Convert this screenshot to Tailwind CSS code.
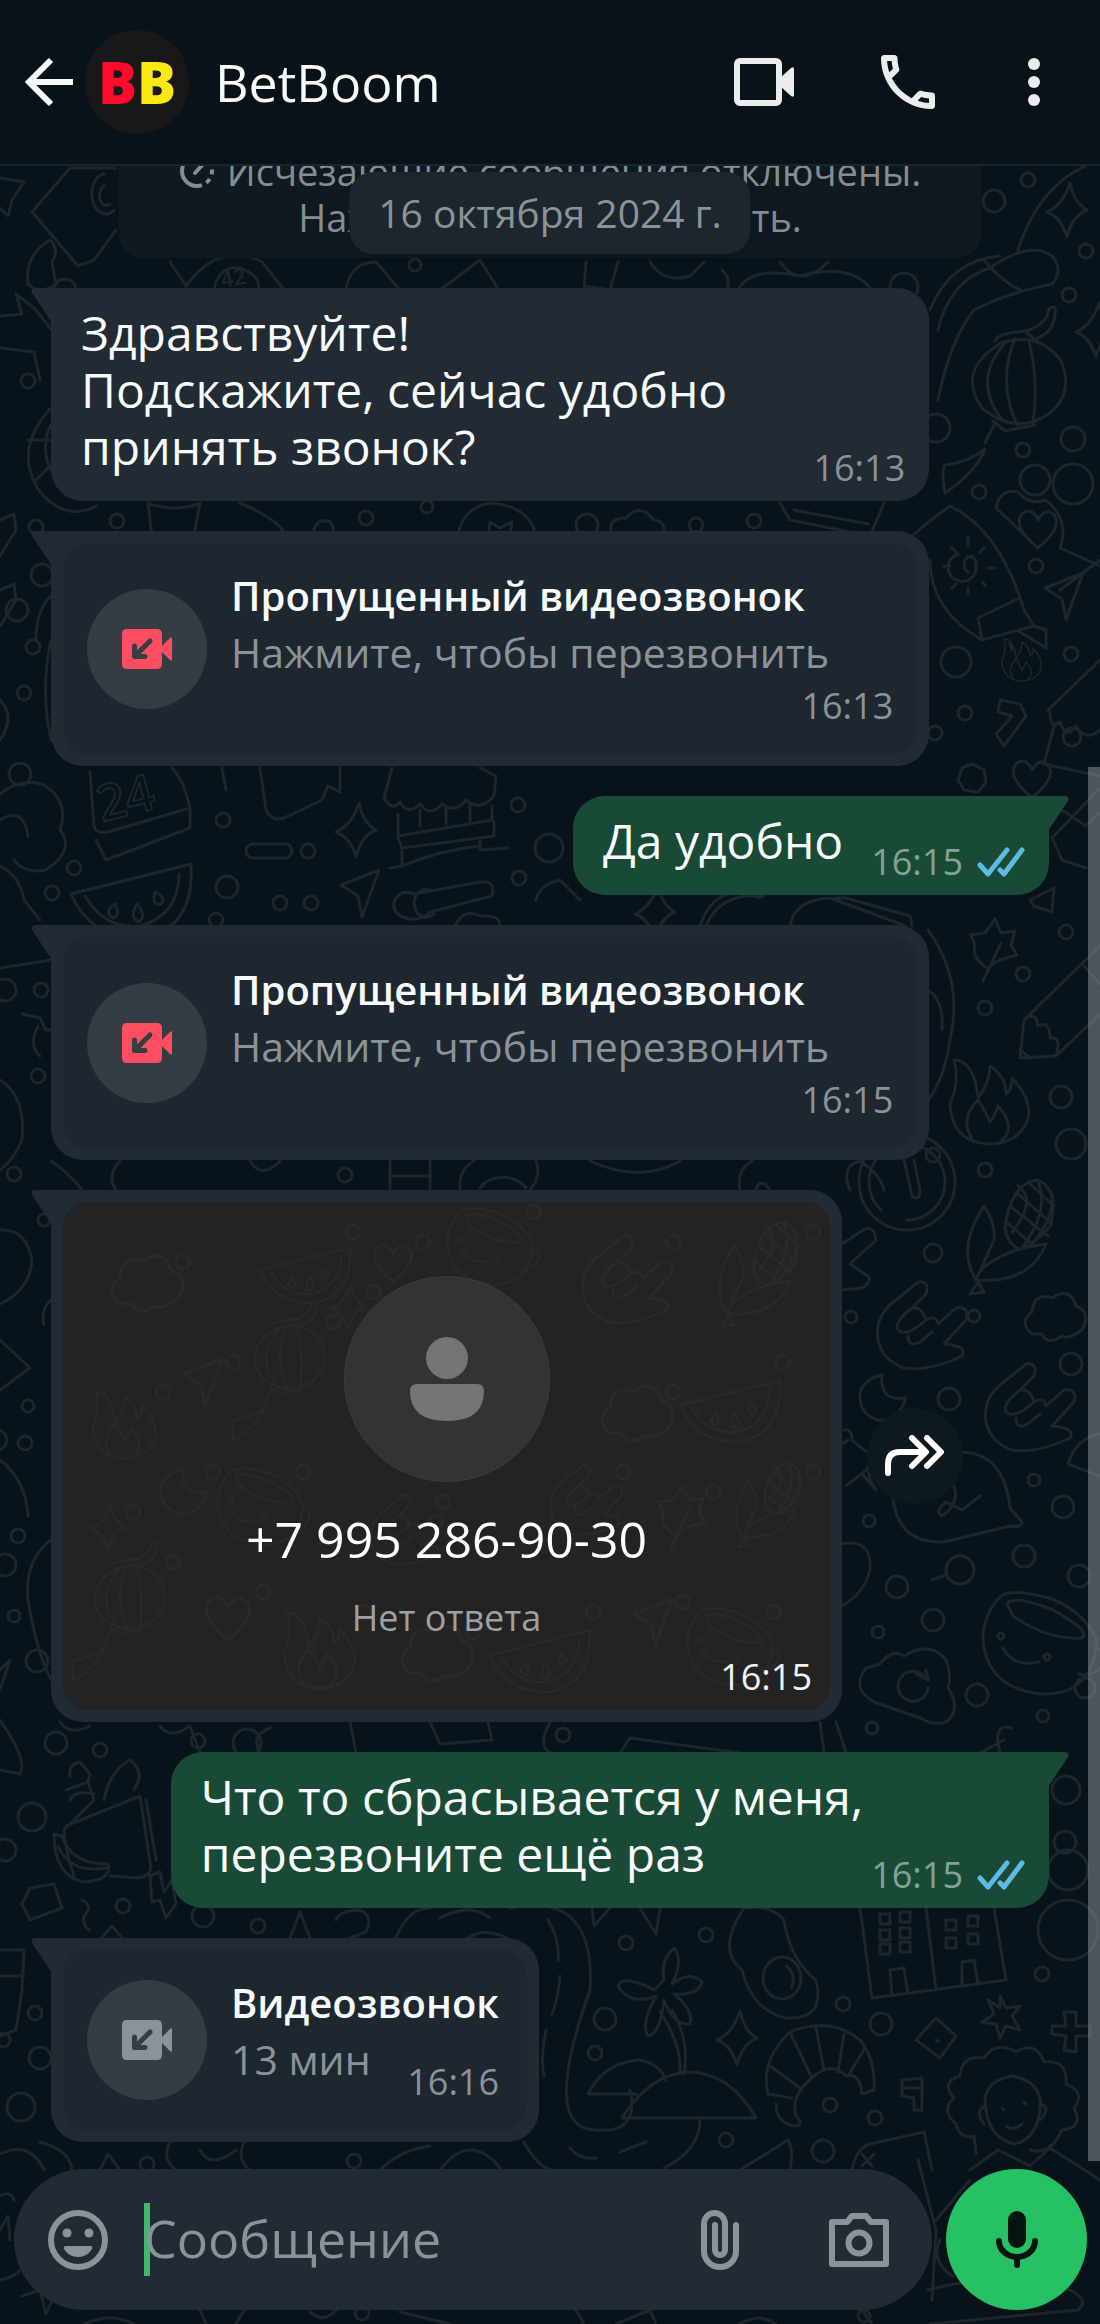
<!DOCTYPE html>
<html lang="ru">
<head>
    <meta charset="UTF-8">
    <meta name="viewport" content="width=device-width, initial-scale=1.0">
    <title>BetBoom</title>
    <script src="https://cdn.jsdelivr.net/npm/@tailwindcss/browser@4"></script>
    <style>
        * {
            font-family: 'Open Sans', 'Noto Sans', sans-serif;
        }
    </style>
</head>
<body class="bg-[#07121a]">
    <!-- Shared shapes -->
    <svg class="hidden" aria-hidden="true">
        <symbol id="star" viewBox="-30 -30 60 60" overflow="visible"><path d="M3-27Q7-7 20 0Q5 6 0 27Q-6 7-20 2Q-4-5 3-27Z"/></symbol>
        <symbol id="plane" viewBox="-30 -30 60 60" overflow="visible"><path d="M19-23L-19-8L-2 3L2 24Z"/></symbol>
        <symbol id="cloud" viewBox="-30 -30 60 60" overflow="visible"><path d="M-24 14Q-38 2-24-8Q-22-28-4-22Q14-34 20-14Q36-8 26 10Q12 20 6 16Q-8 26-14 14Z"/></symbol>
        <symbol id="heart" viewBox="-30 -30 60 60" overflow="visible"><path d="M0 20Q-26-2-16-14Q-6-22 0-8Q8-22 17-12Q24 0 0 20Z"/></symbol>
        <symbol id="flame" viewBox="-50 -50 100 100" overflow="visible"><path d="M-38 6Q-28-16-34-38Q-14-38-10 0Q2-16 2-32Q18-22 18-4Q24-8 24-20Q48 6 38 26Q28 46 0 46Q-36 44-38 6ZM-14 44Q-30 22-10 2Q-2 14 2 24Q8 16 10 8Q30 30 12 44"/></symbol>
        <symbol id="moon" viewBox="-30 -30 60 60" overflow="visible"><path d="M0-23Q-3 4 24 0Q16 24-4 22Q-24 16-22-6Q-16-20 0-23Z"/></symbol>
        <symbol id="hand" viewBox="-50 -50 100 100" overflow="visible"><path d="M-40 12Q-44-12-22-28L0-46Q12-48 8-34L-6-20Q4-22 8-8Q18-14 20-4L38-20Q52-22 48-8L26 16Q50 18 44 28Q10 44-14 40Q-36 32-40 12ZM-6-20Q-24-6-20 2Q-12 10 8-8M-10 8Q-10 20 2 14L14 4"/></symbol>
        <symbol id="leaf" viewBox="-30 -30 60 60" overflow="visible"><path d="M-6 24Q-24 14-20 0L-24-10L-10-12L0-26L6-12L20-14L16 0L22 10L8 14L-2 18ZM-12 36L6-2"/></symbol>
        <symbol id="melon" viewBox="-60 -60 120 120" overflow="visible"><path d="M-64 4L56-26Q60 36 10 48Q-44 50-64 4ZM-50 6Q-30 40 6 36Q44 24 44-16M-20 14q-12 8-2 14q8-2 2-14ZM2 14q-8 14 2 18q8-6-2-18ZM20 2q-4 14 6 12q6-6-6-12Z"/></symbol>
        <symbol id="mug" viewBox="-60 -60 120 120" overflow="visible"><path d="M-36-48Q-24-56 12-46Q46-34 60-4Q56 52 4 50Q-50 44-54-4Q-54-30-36-48ZM-30-40Q-24-50 16-34Q56-12 44-6Q10-4-24-28ZM-34 4Q-24 24 2 18M58 4Q74 6 66 20Q56 34 42 30"/><circle cx="-36" cy="-8" r="3"/><circle cx="10" cy="13" r="3"/></symbol>
        <symbol id="lantern" viewBox="-60 -60 120 120" overflow="visible"><path d="M-16-38Q22-50 44-20Q58 14 30 34Q-2 54-34 28Q-62-10-16-38ZM-12-38Q-46 0-14 40M-2-42Q-20 0 0 44M12-40Q22 0 16 42M-22-40Q-20-48 8-50L22-38M8-50Q30-56 32-72Q40-78 38-66Q36-48 18-42M-24 40L-12 50L18 44M-22 42L-32 62M-32 68Q-40 90-72 112Q-76 88-72 84Q-50 82-32 68Z"/></symbol>
        <symbol id="corn" viewBox="-60 -60 120 120" overflow="visible"><path d="M-4-20Q4-58 28-60Q50-50 40-14Q30 0 10 10Q-8 0-4-20ZM0-34L38-4M6-48L42-16M18-58L44-34M-4-18L22 4M8-54Q28-40 2-8M28-58Q40-30 12 8M42-46Q44-20 20 6M-26-34Q-14-16-16 0L-34 40Q-54 8-26-34ZM-34 40Q-30 22 12 8L36 4Q20 44-34 40ZM-32 42L-40 54L-26 52Z"/></symbol>
    </svg>

    <div class="relative flex h-screen min-h-[1400px] flex-col overflow-hidden">
        <!-- Wallpaper -->
        <svg id="wall" class="absolute inset-0 h-full w-full" viewBox="0 0 1100 2324" preserveAspectRatio="xMidYMid slice" fill="none" stroke="#1c262c" stroke-width="3" stroke-linecap="round" stroke-linejoin="round" aria-hidden="true">
            <!-- top -->
            <path d="M0 178L24 182L12 200L8 216L0 208M32 212L70 168H116M34 214L78 266L94 260L116 230M104 174a14 20 0 1 0 10 36M104 186a7 10 0 1 0 6 18M50 240Q24 256 28 284Q40 296 56 284L52 262Q60 250 50 240M170 262L186 286Q220 240 262 262L284 290M214 290Q218 266 240 268Q262 276 258 290M346 290Q350 262 376 262L400 290M440 290L480 260L500 292M586 262L584 286L610 290L618 262M650 262Q664 284 690 276L704 262M728 290V278L722 270M738 290Q750 266 800 276Q850 262 872 290M780 262Q800 290 828 262"/>
            <text x="222" y="288" transform="rotate(-10 222 288)" fill="#1c262c" stroke="none" font-size="22" font-weight="600">42</text>
            <path d="M938 330Q950 280 990 268Q1030 240 1052 256Q1064 270 1052 284Q1010 292 974 310Q950 340 938 400M984 260Q1000 280 1020 290M930 310Q950 260 1000 256M1018 250Q1040 180 1100 160"/>
            <path d="M0 316L22 314L16 294L34 308L52 330M0 348L34 352L40 380M51 408Q12 450 40 492Q66 522 96 506M51 424Q40 450 51 470M28 440H50M36 480L52 464"/>
            <!-- between first messages -->
            <path d="M148 503L152 536M200 503L194 536M240 503Q280 520 286 536M150 504Q174 512 198 504M312 536Q316 516 330 522Q336 530 332 536M458 536Q462 508 490 503Q530 506 536 536M488 536L490 522L500 528L512 522L510 536M612 536Q606 518 626 518Q640 502 654 520Q668 522 662 536M780 503L790 520L870 536L884 503M794 510L868 524"/>
            <!-- flask with sun -->
            <path d="M912 536Q930 520 950 506Q1000 530 1024 610L1034 626L982 640Q930 610 930 560M982 640L978 618L1020 598M1034 626L1046 630V648L1020 632M1010 644L1012 650"/>
            <path d="M968 572a6 8 0 1 1 8-6a14 14 0 1 1-18-12M968 538V546M968 588V594M944 566H950M988 568H994M951 547l5 5M984 548l-4 4M952 588l4-4M986 586l-4-4"/>
            <path d="M996 508Q1000 488 1018 492Q1030 506 1046 500Q1070 520 1060 548L1100 566M996 508L1030 540M1100 560L1060 590"/>
            <path d="M1048 710L1100 660M1050 712Q1050 730 1060 722Q1066 740 1076 726Q1086 742 1100 730M1054 726L1044 764L1100 776M1000 700L1020 704L1026 716L1004 746L996 734L1012 716L998 712Z"/>
            <path d="M972 764L984 770L986 782L978 792L964 790L958 780L962 768ZM0 520L14 514L16 530L0 556M0 590L14 584L16 600L0 626M51 596Q36 610 36 640M0 700Q16 716 0 740M51 640Q40 690 51 740"/>
            <!-- left of the first reply -->
            <path d="M0 794Q20 778 42 784Q70 800 60 830Q76 850 46 870Q24 874 14 860M0 820Q24 806 28 836M0 866Q20 876 24 900L40 920M90 772L94 826Q96 834 108 832L190 808Q184 780 172 768M96 840L106 860L190 828V808M222 768L226 790M260 768L266 810Q272 822 284 818L322 800L328 786L340 792V768"/>
            <text x="102" y="822" transform="rotate(-14 102 822)" stroke-width="2" font-size="50" font-weight="600">24</text>
            <path d="M384 798Q392 812 400 802Q408 816 420 804Q430 818 442 804Q456 814 466 800Q480 812 494 796L496 776L480 768M384 798L392 768M398 814V836L492 820V806M420 810V826M446 808V824M470 804V822M398 838L402 848L494 836V822M402 848V866L390 868M480 838V850L508 848M402 866Q440 850 480 846"/>
            <rect x="246" y="844" width="46" height="14" rx="7"/>
            <path d="M394 902Q400 888 414 894L480 882Q496 880 492 896L430 912Q420 922 406 918Q392 914 394 902M430 890a12 14 0 1 0 4 24M456 924Q464 908 480 916Q500 914 500 926M536 900Q540 884 560 880L580 900M700 926Q716 880 760 898M706 926Q720 892 764 896M790 926Q794 900 830 898L906 926M836 898L846 898L910 916L912 926M1030 900L1054 888L1052 912L1034 906Z"/>
            <path d="M1100 788L1052 838L1062 860L1086 868M1062 810L1086 826L1100 812"/>
            <!-- right of the second call -->
            <path d="M928 930Q964 980 950 1040Q944 1080 928 1100M928 990Q944 1000 942 1030M1100 946L1024 1020L1020 1058L1056 1056L1100 1014M1024 1020Q1036 1010 1038 1026Q1050 1020 1050 1038Q1062 1036 1056 1056M1084 966L1100 984M1020 1050L1030 1058"/>
            <path d="M0 968L51 960M22 1014L40 1018L46 1030H51M38 1026Q28 1046 40 1056M0 1080Q26 1096 22 1140Q14 1160 0 1170M120 1161Q106 1176 116 1190M51 1161Q70 1174 84 1192M250 1161Q262 1180 280 1161M390 1161V1190M430 1161V1190M390 1176H430M460 1190Q458 1170 474 1161M530 1190Q542 1176 536 1161M480 1188a26 20 0 0 1 46 0M590 1161Q640 1184 680 1161M740 1190Q736 1170 752 1161M850 1190Q840 1166 860 1161Q880 1174 884 1190M756 1190Q760 1176 770 1190"/>
            <circle cx="907" cy="1182" r="48"/><circle cx="907" cy="1182" r="38" stroke-dasharray="60 28"/>
            <path d="M904 1160L912 1196Q920 1202 920 1190L914 1160"/>
            <!-- beside the picture -->
            <path d="M842 1290L862 1288Q872 1282 868 1276L850 1264L876 1240Q874 1222 860 1232L842 1244"/>
            <path d="M844 1430Q852 1428 852 1440L864 1450L876 1456L874 1464L846 1486M862 1474L876 1490L870 1480L868 1466"/>
            <path d="M893 1498Q900 1460 960 1452Q1004 1452 1010 1508L1022 1522Q1022 1528 1010 1526L944 1542Q898 1544 893 1498ZM928 1498Q936 1482 954 1486Q960 1504 942 1516Q934 1512 946 1502L962 1510L980 1496"/>
            <path d="M1100 1434Q1076 1438 1068 1464L1100 1476M842 1544Q872 1538 870 1570Q864 1594 842 1606M842 1444L848 1440"/>
            <path d="M946 1575L932 1580M880 1664Q892 1648 904 1656Q930 1640 946 1660Q952 1676 948 1688Q962 1710 946 1722Q934 1726 920 1718L874 1702Q850 1688 866 1668ZM924 1676A15 15 0 1 0 928 1688M916 1674L928 1680L926 1670"/>
            <path d="M0 1230Q26 1228 32 1260Q30 1290 0 1304M0 1340L30 1368L0 1390M0 1460Q26 1480 28 1516M51 1540Q24 1560 28 1600Q36 1650 51 1680M0 1670L10 1660L0 1690M51 1300Q40 1310 44 1324M0 1430Q14 1440 0 1450"/>
            <path d="M60 1722Q70 1736 90 1726M160 1726Q170 1740 190 1726L200 1753M260 1753Q250 1736 270 1728M350 1722L356 1753M430 1722L440 1744L492 1740L488 1722M550 1722Q530 1760 572 1753M620 1753L630 1738L850 1768M820 1722L824 1753M836 1722L846 1753M1000 1753Q992 1722 1012 1728M1004 1740L980 1753"/>
            <!-- lunch bag -->
            <path d="M66 1790L88 1782L94 1800L64 1830Q66 1854 74 1876M70 1800Q74 1790 94 1794M70 1776Q68 1764 80 1762L90 1774L88 1782M104 1800Q110 1770 130 1760Q146 1772 134 1790M66 1826L140 1796L150 1862Q154 1876 138 1878L110 1876M146 1800L156 1860M54 1834L62 1836Q70 1864 108 1864Q112 1880 84 1882Q54 1876 54 1834ZM58 1846Q70 1874 106 1868M30 1888L54 1884L62 1908L30 1920L22 1904ZM150 1876L160 1872L164 1892L172 1880L176 1904L166 1918L160 1900L152 1902Z"/>
            <path d="M82 1900Q94 1906 84 1916Q82 1926 90 1930M0 1720Q28 1760 20 1774L0 1770M0 1950H24L22 1990L16 2030L0 2036M0 1976H24M336 1920Q340 1910 360 1910Q374 1916 366 1932L350 1938M290 1938L300 1912L310 1938M100 1940L112 1926L122 1938"/>
            <!-- island -->
            <path d="M396 1938Q408 1908 430 1908M440 1918Q470 1902 490 1918M468 1938Q486 1926 510 1940M510 1908Q596 1890 590 1990Q540 2130 596 2130Q640 2134 630 2090M548 1920Q560 1940 558 1960M560 1976Q558 2000 552 2014M546 2030Q540 2060 544 2076M592 1908L594 1926L610 1908M640 1908L656 1934L660 1908M524 2142Q540 2172 560 2172M700 2120Q700 2150 664 2168M570 2148Q580 2160 596 2158M620 2152L646 2142"/>
            <path d="M664 1980Q660 1960 674 1948Q684 1960 672 1984Q690 1970 702 1982Q698 1996 674 1994Q694 2010 690 2024Q674 2026 664 2000Q660 2034 648 2036Q640 2024 656 1996Q630 2006 618 1986Q624 1974 654 1990ZM672 2010Q690 2040 684 2074M660 2012Q682 2044 680 2074M622 2118Q650 2074 688 2072Q730 2072 756 2118ZM588 2094Q604 2062 640 2060Q660 2064 666 2080M588 2094H636"/>
            <!-- egg, building, croissant -->
            <path d="M744 1908Q770 1904 784 1920Q790 1960 816 1980Q826 2020 786 2018Q752 2010 742 1970Q716 1950 744 1908Z"/><ellipse cx="782" cy="1978" rx="19" ry="21"/><path d="M786 1966Q796 1972 792 1988"/>
            <path d="M860 1908L872 1998L1006 1980L994 1908M926 1908L936 1990M880 1914h10v10h-10zM900 1912h10v10h-10zM880 1930h10v10h-10zM900 1928h10v10h-10zM880 1944h10v10h-10zM900 1942h10v10h-10zM946 1920h10v10h-10zM968 1916h10v10h-10zM946 1938h10v10h-10zM968 1934h10v10h-10zM892 1996L890 1970L904 1968L908 1994M962 1986V1962L974 1960L978 1984"/>
            <path d="M768 2094Q760 2060 790 2032Q830 2016 860 2040Q876 2060 874 2090L862 2094Q860 2072 846 2076Q830 2060 812 2078Q790 2096 796 2116Q804 2124 796 2126Q776 2124 776 2104M790 2032L812 2078M816 2028L824 2070M844 2034L838 2072M864 2050L848 2076M770 2066L800 2088M768 2094L792 2098"/>
            <path d="M936 2018L956 2036L940 2058L916 2040ZM936 2040l2 1M1000 1996l6 12l14-2l-8 10l8 14l-14-4l-6 12l-4-14l-14-2l12-8l-6-14l12 8ZM1064 2012h12v14h14v10h-14v16l-12-2l2-14l-14-2v-8h14ZM902 2080L922 2078V2110H914V2098L902 2096ZM904 2088H922"/>
            <!-- girl -->
            <path d="M956 2124Q940 2110 954 2098Q940 2082 960 2076Q962 2054 984 2058Q996 2040 1016 2052Q1036 2040 1044 2062Q1068 2060 1066 2084Q1086 2092 1074 2108Q1084 2128 1062 2130Q1050 2156 1030 2150M956 2124Q960 2140 974 2136L976 2154M986 2110Q980 2082 1012 2076Q1044 2082 1040 2110Q1036 2140 1014 2144Q990 2138 986 2110ZM986 2106Q974 2110 984 2124M1040 2104Q1052 2108 1040 2120M1006 2126Q1014 2132 1022 2124M1002 2108l2 2M1024 2102l2 2"/>
            <path d="M852 2170Q856 2148 870 2144L924 2132L932 2170M862 2154l10 12M874 2154l-12 12M740 2170L788 2140Q794 2150 790 2170M970 2170L998 2150L1030 2166L1050 2148L1100 2180M918 2160L936 2230L932 2300M936 2220L970 2180"/>
            <!-- under the composer -->
            <path d="M40 2142Q70 2150 72 2170M0 2154Q30 2140 44 2170M100 2170L108 2154L120 2170M170 2142Q160 2162 180 2172M200 2150Q210 2170 236 2150M244 2142Q236 2160 250 2170M380 2170Q400 2150 430 2146M440 2170Q470 2130 502 2170M0 2196Q10 2190 14 2200M0 2230L8 2216L10 2240M0 2280Q20 2276 28 2260M22 2296L40 2290L46 2314L54 2296M84 2324Q110 2312 134 2324M200 2310L206 2324M244 2310L236 2324M310 2312Q324 2324 336 2310M400 2312L450 2324M576 2310L584 2324M616 2324L650 2310L656 2324M740 2324Q760 2312 776 2324M862 2310L872 2324M928 2290Q1000 2270 1070 2290Q1090 2300 1078 2310L930 2324M940 2240Q930 2260 952 2276"/>
            <use href="#star" x="1037" y="180" width="60" height="60"/><use href="#star" x="1066" y="300" width="60" height="60"/><use href="#star" x="326" y="800" width="60" height="60"/><use href="#star" x="625" y="882" width="60" height="60"/><use href="#star" x="707" y="2008" width="60" height="60"/>
            <use href="#lantern" x="957" y="321" width="120" height="120"/><use href="#heart" x="1008" y="498" width="60" height="60"/><use href="#plane" x="1034" y="566" width="60" height="60"/><use href="#flame" x="996" y="633" width="50" height="50"/><use href="#heart" x="1002" y="748" width="60" height="60"/>
            <use href="#melon" x="75" y="830" width="120" height="120"/><use href="#plane" x="330" y="863" width="60" height="60"/><use href="#leaf" x="965" y="915" width="60" height="60"/><use href="#flame" x="938" y="1048" width="100" height="100"/><use href="#corn" x="950" y="1180" width="120" height="120"/>
            <use href="#hand" x="868" y="1278" width="100" height="100"/><use href="#cloud" x="1026" y="1290" width="60" height="60"/><use href="#hand" x="976" y="1360" width="100" height="100"/><use href="#moon" x="852" y="1368" width="60" height="60"/><use href="#mug" x="977" y="1584" width="120" height="120"/>
        </svg>

        <!-- Header -->
        <header class="relative flex shrink-0 items-center border-b-2 border-[#1a242a] bg-[#0a1219] py-[30px] pr-[60px] pl-6 text-[#f7fafb]">
            <button type="button" aria-label="Назад" class="shrink-0">
                <svg class="h-12 w-[50px]" viewBox="0 0 50 48" fill="none" stroke="currentColor" stroke-width="6"><path d="M49 24H6M27 2L5 24L27 46"/></svg>
            </button>
            <div class="ml-[11px] flex size-[104px] shrink-0 items-center justify-center rounded-full bg-[#181818] text-[58px] leading-none font-black">
                <span class="font-[Roboto] text-[#ff0a2b]">B</span><span class="font-[Roboto] text-[#f9e814]">B</span>
            </div>
            <h1 class="ml-[26px] grow text-[52px] leading-[68px]">BetBoom</h1>
            <div class="flex items-center text-[#e9edee]">
                <button type="button" aria-label="Видеозвонок">
                    <svg class="h-12 w-[60px]" viewBox="0 0 60 48" fill="none" stroke="currentColor"><rect x="3" y="3" width="42" height="42" rx="3" stroke-width="6"/><path d="M46 20L57 10Q60 8 60 11V37Q60 40 57 38L46 28Z" fill="currentColor" stroke="none"/></svg>
                </button>
                <button type="button" aria-label="Позвонить" class="ml-[78px]">
                    <svg class="size-[72px]" viewBox="0 0 24 24" fill="currentColor"><path d="M6.54 5c.06.89.21 1.76.45 2.59l-1.2 1.2c-.41-1.2-.67-2.47-.76-3.79h1.51m9.86 12.02c.85.24 1.72.39 2.6.45v1.49c-1.32-.09-2.59-.35-3.8-.75l1.2-1.19M7.5 3H4c-.55 0-1 .45-1 1 0 9.39 7.61 17 17 17 .55 0 1-.45 1-1v-3.49c0-.55-.45-1-1-1-1.24 0-2.45-.2-3.57-.57-.1-.04-.21-.05-.31-.05-.26 0-.51.1-.71.29l-2.2 2.2c-2.83-1.45-5.15-3.76-6.59-6.59l2.2-2.2c.28-.28.36-.67.25-1.02C8.7 6.45 8.5 5.25 8.5 4c0-.55-.45-1-1-1z"/></svg>
                </button>
                <button type="button" aria-label="Меню" class="ml-[84px]">
                    <svg class="h-12 w-3" viewBox="0 0 12 48" fill="currentColor"><circle cx="6" cy="6" r="6"/><circle cx="6" cy="24" r="6"/><circle cx="6" cy="42" r="6"/></svg>
                </button>
            </div>
        </header>

        <!-- Messages, scrolled to the end -->
        <main class="relative flex min-h-0 grow flex-col justify-end gap-[30px] overflow-hidden px-[51px] text-[#f7fafb]">
            <div class="flex shrink-0 flex-col items-center self-center rounded-3xl bg-[#111920] px-[60px] py-[18px] text-[38px] leading-[46px] text-[#868c90]">
                <p class="flex items-center gap-3">
                    <svg class="size-9" viewBox="0 0 36 36" fill="none" stroke="currentColor" stroke-width="4" aria-hidden="true"><path d="M18 3A15 15 0 0 0 18 33"/><path d="M18 33A15 15 0 0 0 18 3" stroke-dasharray="5 5"/><path d="M16 20L26 9" stroke-linecap="round"/></svg>
                    Исчезающие сообщения отключены.
                </p>
                <p>Нажмите, чтобы изменить.</p>
            </div>

            <div class="relative flex w-[88%] shrink-0 items-end justify-between rounded-[32px] rounded-tl-none bg-[#222b33] pt-4 pr-6 pb-2.5 pl-[30px]">
                <svg class="absolute top-0 right-full -mr-px h-9 w-[21px] text-[#222b33]" viewBox="0 0 21 36" fill="currentColor"><path d="M21 0H4Q-1 0 1 5L21 35Z"/></svg>
                <p class="pb-4 text-5xl leading-[57px]">Здравствуйте!<br>Подскажите, сейчас удобно<br>принять звонок?</p>
                <time class="text-[36px] leading-[46px] text-[#8b9398]">16:13</time>
            </div>

            <div class="relative w-[88%] shrink-0 rounded-[32px] rounded-tl-none bg-[#222b33] p-3">
                <svg class="absolute top-0 right-full -mr-px h-9 w-[21px] text-[#222b33]" viewBox="0 0 21 36" fill="currentColor"><path d="M21 0H4Q-1 0 1 5L21 35Z"/></svg>
                <button type="button" class="flex w-full items-center gap-6 rounded-3xl bg-[#1e272f] px-6 py-6 text-left">
                    <span class="flex size-[120px] shrink-0 items-center justify-center rounded-full bg-[#353c43] text-[#ff4d60]">
                        <svg class="h-10 w-[50px]" viewBox="0 0 50 40"><path d="M5 0H35Q40 0 40 5V17L48 9Q50 7 50 10V30Q50 33 48 31L40 23V35Q40 40 35 40H5Q0 40 0 35V5Q0 0 5 0Z" fill="currentColor"/><path d="M28 12L13 27M12.500 17V27.500H23" fill="none" stroke="#353c43" stroke-width="5" stroke-linecap="round" stroke-linejoin="round"/></svg>
                    </span>
                    <span class="flex grow flex-col">
                        <span class="text-[40px] leading-[57px] font-semibold">Пропущенный видеозвонок</span>
                        <span class="text-[41px] leading-[57px] text-[#8b9398]">Нажмите, чтобы перезвонить</span>
                        <time class="self-end text-[36px] leading-[49px] text-[#8b9398]">16:13</time>
                    </span>
                </button>
            </div>

            <div class="relative flex shrink-0 items-end gap-7 self-end rounded-[32px] rounded-tr-none bg-[#184a36] pt-4 pr-6 pb-2.5 pl-[30px]">
                <svg class="absolute top-0 left-full -ml-px h-9 w-[21px] text-[#184a36]" viewBox="0 0 21 36" fill="currentColor"><path d="M0 0H17Q22 0 20 5L0 35Z"/></svg>
                <p class="pb-4 text-5xl leading-[57px]">Да удобно</p>
                <div class="flex items-center gap-[14px]">
                    <time class="text-[36px] leading-[46px] text-[#84a394]">16:15</time>
                    <svg class="h-[30px] w-12" viewBox="0 0 48 30" fill="none" stroke="#5cbbe2" stroke-width="5" stroke-linecap="round" stroke-linejoin="round" aria-label="Прочитано"><path d="M3 18L11 27L30 3M23 23L27 27L45 3"/></svg>
                </div>
            </div>

            <div class="relative w-[88%] shrink-0 rounded-[32px] rounded-tl-none bg-[#222b33] p-3">
                <svg class="absolute top-0 right-full -mr-px h-9 w-[21px] text-[#222b33]" viewBox="0 0 21 36" fill="currentColor"><path d="M21 0H4Q-1 0 1 5L21 35Z"/></svg>
                <button type="button" class="flex w-full items-center gap-6 rounded-3xl bg-[#1e272f] px-6 py-6 text-left">
                    <span class="flex size-[120px] shrink-0 items-center justify-center rounded-full bg-[#353c43] text-[#ff4d60]">
                        <svg class="h-10 w-[50px]" viewBox="0 0 50 40"><path d="M5 0H35Q40 0 40 5V17L48 9Q50 7 50 10V30Q50 33 48 31L40 23V35Q40 40 35 40H5Q0 40 0 35V5Q0 0 5 0Z" fill="currentColor"/><path d="M28 12L13 27M12.500 17V27.500H23" fill="none" stroke="#353c43" stroke-width="5" stroke-linecap="round" stroke-linejoin="round"/></svg>
                    </span>
                    <span class="flex grow flex-col">
                        <span class="text-[40px] leading-[57px] font-semibold">Пропущенный видеозвонок</span>
                        <span class="text-[41px] leading-[57px] text-[#8b9398]">Нажмите, чтобы перезвонить</span>
                        <time class="self-end text-[36px] leading-[49px] text-[#8b9398]">16:15</time>
                    </span>
                </button>
            </div>

            <!-- Picture message -->
            <div class="flex shrink-0 items-center gap-[25px] pr-[86px]">
                <div class="relative grow rounded-[32px] rounded-tl-none bg-[#222b33] p-3">
                    <svg class="absolute top-0 right-full -mr-px h-9 w-[21px] text-[#222b33]" viewBox="0 0 21 36" fill="currentColor"><path d="M21 0H4Q-1 0 1 5L21 35Z"/></svg>
                    <div class="relative flex flex-col items-center overflow-hidden rounded-3xl bg-[#232323] px-[18px] pt-[74px] pb-[9px]">
                        <svg id="cardWall" class="absolute inset-0 h-full w-full" viewBox="0 0 767 508" preserveAspectRatio="xMidYMid slice" fill="none" stroke="#292929" stroke-width="3" stroke-linecap="round" stroke-linejoin="round" aria-hidden="true"></svg>
                        <div class="relative flex size-[206px] items-center justify-center rounded-full border border-[#3c3c3c] bg-[#333]">
                            <svg class="h-[84px] w-[74px]" viewBox="0 0 74 84" fill="#757575"><circle cx="37" cy="21" r="21"/><path d="M7 47H67Q74 47 74 54Q74 84 37 84Q0 84 0 54Q0 47 7 47Z"/></svg>
                        </div>
                        <p class="relative mt-[22px] text-[50px] leading-[70px] text-white">+7 995 286-90-30</p>
                        <p class="relative mt-5 text-[36px] leading-[48px] text-[#a0a0a0]">Нет ответа</p>
                        <time class="relative mt-[11px] self-end text-[36px] leading-[48px] text-[#f2f2f2]">16:15</time>
                    </div>
                </div>
                <button type="button" aria-label="Переслать" class="flex size-24 shrink-0 items-center justify-center rounded-full bg-[#0d181f]">
                    <svg class="h-[42px] w-[60px]" viewBox="0 0 60 42" fill="none" stroke="#fff" stroke-width="6" stroke-linecap="round" stroke-linejoin="round"><path d="M3 38V29Q3 17 15 17H40M27 3L41 17L27 31M42 3L56 17L42 31"/></svg>
                </button>
            </div>

            <div class="relative flex max-w-[89%] shrink-0 items-end gap-2 self-end rounded-[32px] rounded-tr-none bg-[#184a36] pt-4 pr-6 pb-2.5 pl-[30px]">
                <svg class="absolute top-0 left-full -ml-px h-9 w-[21px] text-[#184a36]" viewBox="0 0 21 36" fill="currentColor"><path d="M0 0H17Q22 0 20 5L0 35Z"/></svg>
                <p class="pb-4 text-5xl leading-[57px] whitespace-nowrap">Что то сбрасывается у меня,<br>перезвоните ещё раз</p>
                <div class="flex items-center gap-[14px]">
                    <time class="text-[36px] leading-[46px] text-[#84a394]">16:15</time>
                    <svg class="h-[30px] w-12" viewBox="0 0 48 30" fill="none" stroke="#5cbbe2" stroke-width="5" stroke-linecap="round" stroke-linejoin="round" aria-label="Прочитано"><path d="M3 18L11 27L30 3M23 23L27 27L45 3"/></svg>
                </div>
            </div>

            <div class="relative shrink-0 self-start rounded-[32px] rounded-tl-none bg-[#222b33] p-3">
                <svg class="absolute top-0 right-full -mr-px h-9 w-[21px] text-[#222b33]" viewBox="0 0 21 36" fill="currentColor"><path d="M21 0H4Q-1 0 1 5L21 35Z"/></svg>
                <button type="button" class="flex items-center gap-6 rounded-3xl bg-[#1e272f] py-6 pr-7 pl-6 text-left">
                    <span class="flex size-[120px] shrink-0 items-center justify-center rounded-full bg-[#353c43] text-[#8b9398]">
                        <svg class="h-10 w-[50px]" viewBox="0 0 50 40"><path d="M5 0H35Q40 0 40 5V17L48 9Q50 7 50 10V30Q50 33 48 31L40 23V35Q40 40 35 40H5Q0 40 0 35V5Q0 0 5 0Z" fill="currentColor"/><path d="M28 12L13 27M12.500 17V27.500H23" fill="none" stroke="#353c43" stroke-width="5" stroke-linecap="round" stroke-linejoin="round"/></svg>
                    </span>
                    <span class="flex flex-col">
                        <span class="text-[40px] leading-[57px] font-semibold">Видеозвонок</span>
                        <span class="flex items-end justify-between">
                            <span class="pb-[18px] text-[41px] leading-[57px] text-[#8b9398]">13 мин</span>
                            <time class="text-[36px] leading-[49px] text-[#8b9398]">16:16</time>
                        </span>
                    </span>
                </button>
            </div>

            <div class="absolute top-1.5 left-1/2 -translate-x-1/2 rounded-3xl bg-[#1d262c] px-[29px] py-[18px] text-[39px] leading-[46px] font-medium whitespace-nowrap text-[#8b9398] shadow-md">16 октября 2024 г.</div>
        </main>

        <!-- Composer -->
        <footer class="relative flex shrink-0 items-center gap-[14px] pt-[27px] pr-[13px] pb-[14px] pl-[14px] text-[#8a9498]">
            <form class="flex h-[141px] min-w-0 grow items-center rounded-full bg-[#222b33] pr-[43px] pl-[34px]">
                <button type="button" aria-label="Эмодзи" class="shrink-0">
                    <svg class="size-[60px]" viewBox="0 0 60 60" fill="currentColor"><circle cx="30" cy="30" r="27" fill="none" stroke="currentColor" stroke-width="6"/><circle cx="19" cy="23" r="4.500"/><circle cx="41" cy="23" r="4.500"/><path d="M18 36H42Q45 36 44 39Q39 47 30 47Q21 47 16 39Q15 36 18 36Z"/></svg>
                </button>
                <span class="ml-9 h-[73px] w-1.5 shrink-0 bg-[#3fb96c]"></span>
                <input type="text" aria-label="Сообщение" placeholder="Сообщение" class="-ml-1.5 min-w-0 grow bg-transparent pb-1 text-[52px] leading-[72px] outline-none placeholder:text-[#8a9498]">
                <button type="button" aria-label="Прикрепить" class="shrink-0">
                    <svg class="h-[60px] w-[38px]" viewBox="0 0 38 60" fill="none" stroke="currentColor" stroke-width="6" stroke-linecap="round"><path d="M35 15V41A16 16 0 0 1 3 41V13.500A10.500 10.500 0 0 1 24 13.500V40A5 5 0 0 1 14 40V15"/></svg>
                </button>
                <button type="button" aria-label="Камера" class="ml-[90px] shrink-0">
                    <svg class="h-[54px] w-[60px]" viewBox="0 0 60 54" fill="none" stroke="currentColor" stroke-width="6" stroke-linejoin="round"><path d="M3 9H18L23 3H37L42 9H57V51H3Z"/><circle cx="30" cy="30" r="10.500"/></svg>
                </button>
            </form>
            <button type="button" aria-label="Голосовое сообщение" class="flex size-[141px] shrink-0 items-center justify-center rounded-full bg-[#25c162]">
                <svg class="h-[57px] w-[42px]" viewBox="0 0 42 57" fill="none" stroke="#06140f" stroke-width="6" stroke-linecap="round"><rect x="12" y="0" width="18" height="37" rx="9" fill="#06140f" stroke="none"/><path d="M3 30A18 16 0 0 0 39 30M21 47V54"/></svg>
            </button>
        </footer>

        <!-- Scroll thumb -->
        <div class="absolute top-[33%] right-0 h-[60%] w-3 bg-[#8f9799]/50"></div>
    </div>

    <script>
        // x, y, radius
        const dots = [
            [1028, 180, 7], [994, 201, 11], [1086, 251, 7], [415, 265, 6], [904, 287, 14], [65, 290, 11], [1069, 295, 7], [28, 381, 7],
            [936, 428, 14], [1073, 439, 12], [1023, 450, 7], [1035, 480, 15], [1073, 484, 20], [979, 492, 7], [117, 521, 7], [36, 527, 7],
            [366, 518, 7], [427, 507, 6], [587, 525, 11], [696, 525, 7], [754, 521, 7], [1036, 566, 7], [956, 662, 15], [1071, 654, 7],
            [965, 713, 7], [935, 733, 7], [1072, 737, 9], [42, 575, 11], [17, 610, 11], [33, 647, 7], [24, 693, 7], [20, 774, 11],
            [52, 893, 7], [74, 868, 7], [223, 820, 7], [227, 887, 11], [308, 851, 7], [280, 903, 7], [311, 903, 7], [519, 878, 7],
            [518, 805, 7], [549, 848, 14], [216, 920, 7], [1066, 932, 7], [1023, 974, 7], [985, 1008, 7], [1061, 1097, 11], [1071, 1144, 15],
            [985, 1170, 7], [41, 990, 7], [38, 1076, 7], [5, 990, 11], [345, 1175, 7], [933, 1155, 7], [14, 1174, 7], [933, 1253, 9],
            [851, 1317, 6], [974, 1316, 6], [1071, 1364, 11], [949, 1399, 11], [922, 1430, 6], [1034, 1480, 6], [1063, 1507, 11],
            [869, 1521, 6], [1024, 1556, 11], [960, 1570, 14], [897, 1587, 11], [933, 1620, 11], [878, 1632, 6], [1079, 1576, 11],
            [977, 1695, 11], [1043, 1716, 6], [1085, 1688, 10], [872, 1728, 6], [44, 1220, 6], [28, 1406, 6], [25, 1443, 7], [18, 1536, 7],
            [14, 1616, 6], [37, 1661, 11], [5, 1565, 11], [563, 1735, 7], [56, 1743, 11], [100, 1750, 7], [247, 1743, 14], [198, 1741, 7],
            [32, 1817, 14], [5, 1850, 11], [123, 1906, 7], [258, 1926, 7], [203, 1916, 11], [35, 2013, 7], [40, 2058, 11], [3, 2040, 7],
            [626, 1943, 7], [706, 1935, 7], [605, 2019, 11], [595, 2053, 7], [843, 2004, 7], [881, 2024, 11], [1042, 1974, 7], [830, 2105, 7],
            [875, 2118, 7], [726, 2140, 7], [823, 2151, 11], [21, 2107, 14], [354, 2161, 7], [147, 2164, 7], [1066, 1790, 14],
            [1068, 1870, 20], [1068, 1930, 30], [1065, 1842, 11], [362, 2313, 7], [864, 2316, 6]
        ];
        const cardShapes = [
            ['cloud', 50, 50, 70], ['melon', 200, 20, 90], ['heart', 300, 30, 60], ['mug', 380, 0, 90], ['hand', 510, 30, 100], ['corn', 640, 20, 110],
            ['star', 260, 80, 50], ['flame', 20, 180, 80], ['lantern', 180, 110, 90], ['plane', 110, 150, 60], ['melon', 620, 150, 100], ['cloud', 540, 180, 70],
            ['moon', 90, 260, 60], ['mug', 150, 260, 90], ['hand', 480, 260, 80], ['leaf', 590, 280, 60], ['corn', 660, 260, 90], ['star', 20, 300, 50],
            ['lantern', 20, 350, 90], ['heart', 130, 380, 70], ['flame', 210, 400, 90], ['cloud', 340, 420, 70], ['melon', 430, 400, 100], ['plane', 560, 390, 60],
            ['mug', 620, 400, 90], ['hand', 300, 290, 80]
        ];
        const ns = 'http://www.w3.org/2000/svg';
        function add(parent, tag, attrs) {
            const el = document.createElementNS(ns, tag);
            Object.keys(attrs).forEach(k => el.setAttribute(k, attrs[k]));
            parent.appendChild(el);
        }
        const wall = document.getElementById('wall');
        const cardWall = document.getElementById('cardWall');
        dots.forEach(d => add(wall, 'circle', { cx: d[0], cy: d[1], r: d[2] }));
        cardShapes.forEach(s => {
            add(cardWall, 'use', { href: '#' + s[0], x: s[1], y: s[2], width: s[3], height: s[3] });
            add(cardWall, 'circle', { cx: s[1] + s[3], cy: s[2] + 10, r: 7 });
        });
    </script>
</body>
</html>
